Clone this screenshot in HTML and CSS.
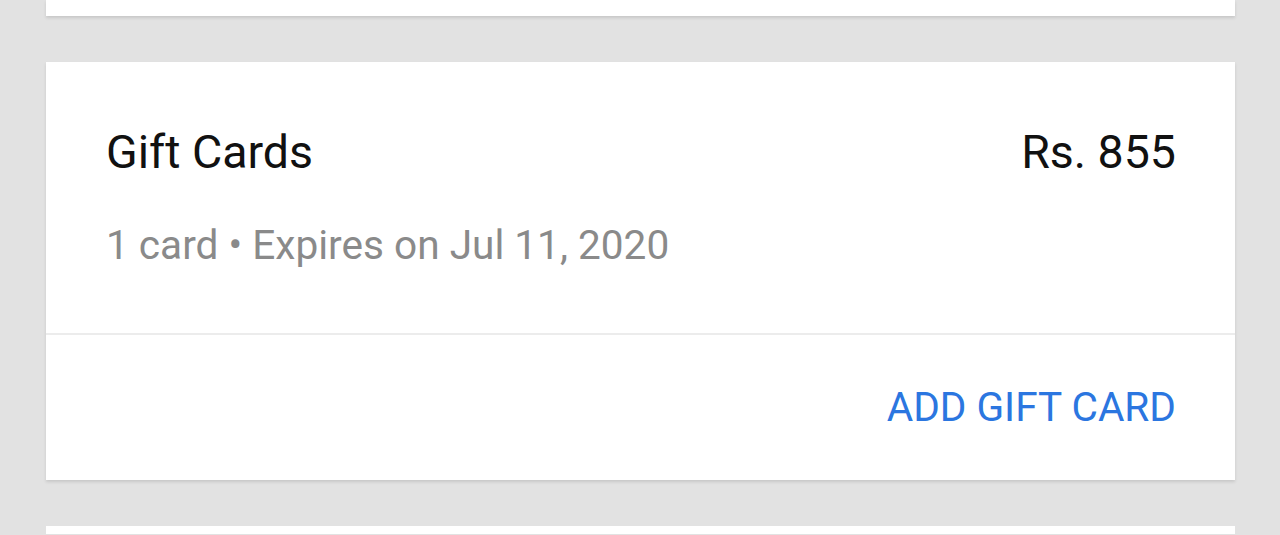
FILE: index.html
```html
<!DOCTYPE html>
<html lang="en">
<head>
  <meta charset="UTF-8" />
  <meta name="viewport" content="width=device-width, initial-scale=1.0"/>
  <title>Gift Cards</title>
  <link rel="stylesheet" href="styles.css">
</head>
<body>
  <div class="card card-prev"></div>

  <div class="card">
    <div class="card-body">
      <div class="card-row">
        <span class="card-title">Gift Cards</span>
        <span class="card-amount">Rs. 855</span>
      </div>
      <div class="card-meta">1 card • Expires on Jul 11, 2020</div>
    </div>
    <div class="card-actions">
      <a class="btn-text" href="#">ADD GIFT CARD</a>
    </div>
  </div>

  <div class="card card-next"></div>
</body>
</html>
```

FILE: styles.css
```css
:root {
  --bg: #e2e2e2;
  --text: #111;
  --muted: #8a8a8a;
  --accent: #2b76e0;
}

* {
  box-sizing: border-box;
}

body {
  font-family: Roboto, 'Noto Sans', sans-serif;
  background: var(--bg);
  color: var(--text);
  margin: 0;
  padding: 0 45px 0 46px;
  display: flex;
  flex-direction: column;
  gap: 46px;
}

.card {
  background: white;
  box-shadow: 0 2px 3px rgba(0,0,0,0.12);
  flex-shrink: 0;
}

.card-prev {
  height: 16px;
}

.card-next {
  height: 8px;
  box-shadow: none;
}

.card-body {
  padding: 66px 59px 64px 60px;
  border-bottom: 2px solid #ececec;
}

.card-row {
  display: flex;
  justify-content: space-between;
  font-size: 46.5px;
  line-height: 48px;
}

.card-meta {
  margin-top: 45px;
  font-size: 40.6px;
  line-height: 48px;
  color: var(--muted);
}

.card-actions {
  display: flex;
  justify-content: flex-end;
  padding: 48px 59px 49px;
}

.btn-text {
  color: var(--accent);
  text-decoration: none;
  font-size: 40.6px;
  line-height: 48px;
}
```
